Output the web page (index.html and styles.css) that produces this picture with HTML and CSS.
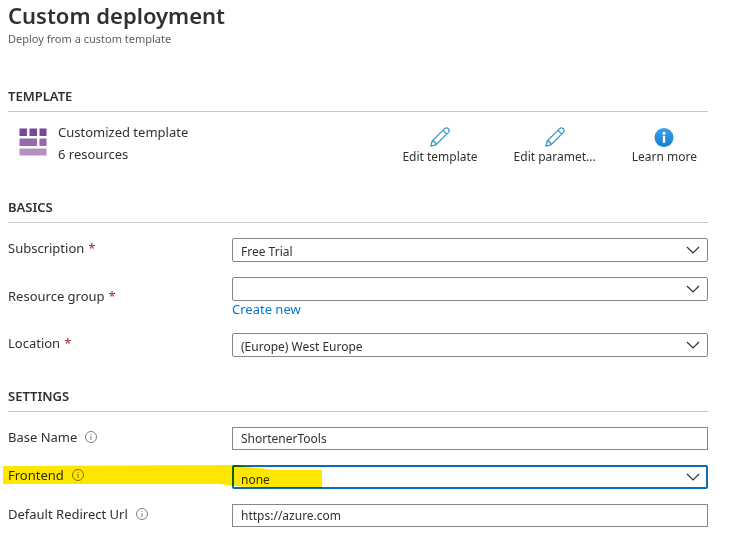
FILE: index.html
```html
<!DOCTYPE html>
<html lang="en">
<head>
<meta charset="utf-8">
<title>Custom deployment</title>
<link rel="stylesheet" href="styles.css">
</head>
<body>
<svg width="0" height="0" class="symbols" aria-hidden="true">
  <symbol id="pencil" viewBox="0 0 20 20">
    <path d="M0.8 19.2 L2.2 14 L14.6 1.6 Q16.5 0 18.3 1.7 Q20 3.5 18.4 5.4 L6 17.8 Z M2.2 14 Q5.6 14.4 6 17.8 M12.9 3.3 L16.7 7.1" fill="none" stroke="#3b9ac4" stroke-width="1.3" stroke-linejoin="round"/>
  </symbol>
  <symbol id="chevron" viewBox="0 0 14 8">
    <path d="M1 1 L7 7 L13 1" fill="none" stroke="#323130" stroke-width="1.2"/>
  </symbol>
  <symbol id="info" viewBox="0 0 12 12">
    <circle cx="6" cy="6" r="5.5" fill="none" stroke="#605e5c" stroke-width="0.8"/>
    <path d="M6 5 V9 M6 3 V4" stroke="#605e5c" stroke-width="0.8"/>
  </symbol>
</svg>
<main>
  <header>
    <h1>Custom deployment</h1>
    <p class="subtitle">Deploy from a custom template</p>
  </header>

  <section>
    <h2>TEMPLATE</h2>
    <div class="template">
      <svg class="template-icon" viewBox="0 0 28 28" aria-hidden="true">
        <path d="M0.5 0.5h7.5v7.5h-7.5z M10.5 0.5h7.5v7.5h-7.5z M20.5 0.5h7v7.5h-7z" fill="#7a4696"/>
        <path d="M0.5 10.5h17.5v7.5h-17.5z M20.5 10.5h7v7.5h-7z" fill="#9768ab"/>
        <path d="M0.5 20.5h27v7h-27z" fill="#b48fc2"/>
      </svg>
      <div class="template-text">
        <div>Customized template</div>
        <div>6 resources</div>
      </div>
      <div class="actions">
        <button type="button"><svg viewBox="0 0 20 20"><use href="#pencil"/></svg>Edit template</button>
        <button type="button"><svg viewBox="0 0 20 20"><use href="#pencil"/></svg>Edit paramet...</button>
        <button type="button"><svg viewBox="0 0 20 20">
          <defs><linearGradient id="blue" x2="0" y2="1"><stop stop-color="#41a0e4"/><stop offset="1" stop-color="#1280d4"/></linearGradient></defs>
          <circle cx="10" cy="10.5" r="9.5" fill="url(#blue)"/>
          <circle cx="10" cy="6.2" r="1.5" fill="#fff"/>
          <path d="M8.8 8.8h2.4v7h-2.4z" fill="#fff"/>
        </svg>Learn more</button>
      </div>
    </div>
  </section>

  <section>
    <h2>BASICS</h2>
    <div class="form">
      <div class="row">
        <label for="subscription">Subscription <span class="required">*</span></label>
        <div class="field"><select id="subscription"><option>Free Trial</option></select><svg class="chevron"><use href="#chevron"/></svg></div>
      </div>
      <div class="row">
        <label for="group">Resource group <span class="required">*</span></label>
        <div>
          <div class="field"><select id="group"><option></option></select><svg class="chevron"><use href="#chevron"/></svg></div>
          <a href="#create">Create new</a>
        </div>
      </div>
      <div class="row">
        <label for="location">Location <span class="required">*</span></label>
        <div class="field"><select id="location"><option>(Europe) West Europe</option></select><svg class="chevron"><use href="#chevron"/></svg></div>
      </div>
    </div>
  </section>

  <section>
    <h2>SETTINGS</h2>
    <div class="form">
      <div class="row">
        <label for="base">Base Name <svg class="info"><use href="#info"/></svg></label>
        <div class="field"><input id="base" type="text" value="ShortenerTools"></div>
      </div>
      <div class="row">
        <label for="frontend">Frontend <svg class="info"><use href="#info"/></svg></label>
        <div class="field"><select id="frontend" class="active"><option>none</option></select><svg class="chevron"><use href="#chevron"/></svg></div>
        <svg class="marker" viewBox="0 0 320 24" aria-hidden="true"><path d="M0 1 L232 0 L256 3 L272 5 H319 V23 L260 23 L232 21 L216 19 H0 Z" fill="#ffe600"/></svg>
      </div>
      <div class="row">
        <label for="redirect">Default Redirect Url <svg class="info"><use href="#info"/></svg></label>
        <div class="field"><input id="redirect" type="text" value="https://azure.com"></div>
      </div>
    </div>
  </section>
</main>
</body>
</html>
```
FILE: styles.css
```css
* { box-sizing: border-box; }

body {
  margin: 0;
  background: #fff;
  color: #323130;
  font-family: "Segoe UI", "Noto Sans", sans-serif;
  font-size: 13px;
  line-height: 18px;
}

.symbols { position: absolute; }

main { padding: 0 23px 0 8px; }

header { padding-bottom: 38px; }

h1 {
  margin: 0;
  font-size: 22px;
  font-weight: 600;
  line-height: 30px;
}

.subtitle {
  margin: 0;
  color: #605e5c;
  font-size: 11px;
}

h2 {
  margin: 0;
  padding-bottom: 5px;
  border-bottom: 1px solid #c8c8c8;
  font-size: 13px;
  font-weight: 600;
  line-height: 20px;
}

.template {
  display: flex;
  align-items: flex-start;
  padding: 9px 10px 30px 11px;
}

.template-icon {
  width: 28px;
  height: 28px;
  margin: 7px 11px 0 0;
}

.template-text {
  flex: 1;
  line-height: 22px;
}

.actions {
  display: flex;
  gap: 34px;
  padding-top: 6px;
}

.actions button {
  display: flex;
  flex-direction: column;
  align-items: center;
  padding: 0 1px;
  border: 0;
  background: none;
  color: inherit;
  font: inherit;
  font-size: 12px;
  line-height: 20px;
  white-space: nowrap;
}

.actions svg {
  width: 20px;
  height: 20px;
}

.form {
  display: grid;
  gap: 15px;
  padding: 15px 0 29px;
}

section:last-child .form { padding-bottom: 8px; }

.row {
  position: relative;
  display: grid;
  grid-template-columns: 224px 1fr;
  align-items: center;
}

label {
  display: flex;
  align-items: center;
  padding-bottom: 4px;
}

.required {
  margin-left: 4px;
  color: #a4262c;
}

.info {
  width: 12px;
  height: 12px;
  margin-left: 8px;
}

.field { position: relative; }

select,
input {
  display: block;
  width: 100%;
  margin: 0;
  border: 1px solid #8a8886;
  appearance: none;
  background: #fff;
  color: inherit;
  font: inherit;
  font-size: 12px;
}

select {
  height: 24px;
  padding: 4px 8px 0;
  border-radius: 2px;
}

input {
  height: 23px;
  padding: 0 8px;
  border-radius: 0;
}

select.active {
  padding: 4px 7px 0;
  border: 2px solid #0f6cb0;
}

.chevron {
  position: absolute;
  top: 8px;
  right: 8px;
  width: 14px;
  height: 8px;
  pointer-events: none;
}

a {
  display: block;
  color: #0078d4;
  line-height: 17px;
  text-decoration: none;
}

.marker {
  position: absolute;
  top: 0;
  left: -5px;
  width: 320px;
  height: 24px;
  mix-blend-mode: multiply;
  pointer-events: none;
}
```
